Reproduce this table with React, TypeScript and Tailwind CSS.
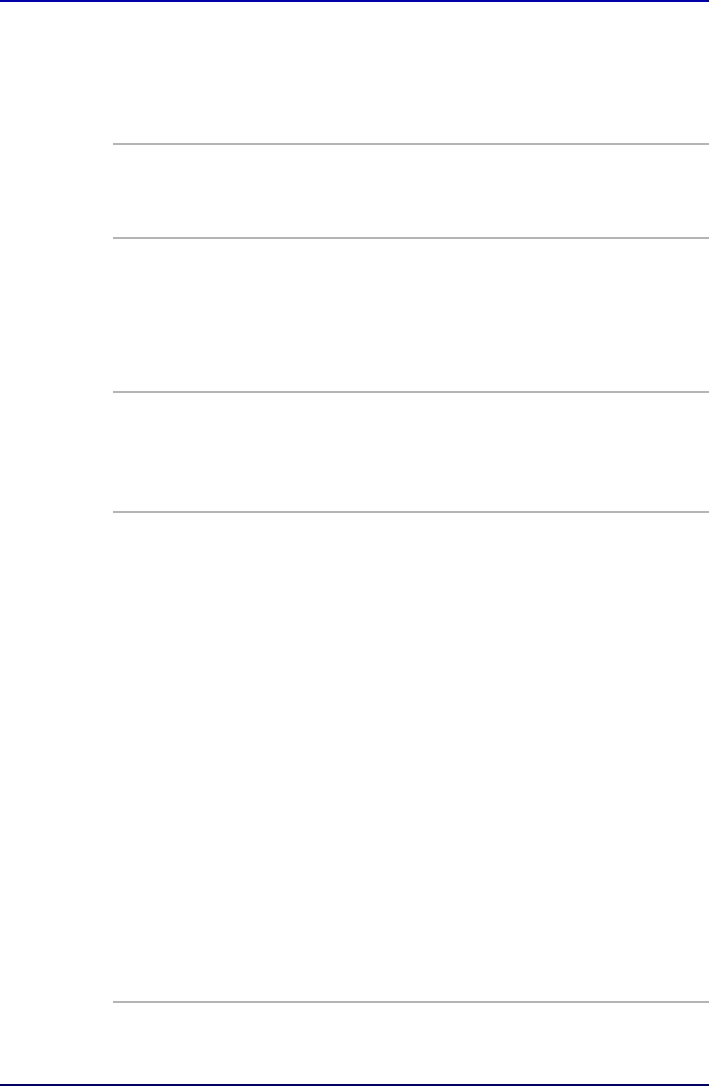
// src/App.tsx
const sections = [
  { id: "s1", height: "h-[94px]" },
  { id: "s2", height: "h-[154px]" },
  { id: "s3", height: "h-[120px]" },
  { id: "s4", height: "h-[490px]" },
  { id: "s5", height: "flex-1" },
];

export default function App() {
  return (
    <div className="w-[709px] h-[1086px] flex flex-col bg-white font-['Liberation_Sans',sans-serif]">
      <div className="h-[2px] bg-[#0000a8] shrink-0" />
      <div className="flex-1 flex flex-col pl-[113px]">
        <div className="h-[141px] shrink-0" />
        {sections.map((s) => (
          <div key={s.id} className={`border-t-2 border-[#b4b4b4] shrink-0 ${s.height}`} />
        ))}
      </div>
      <div className="h-[2px] bg-[#000066] shrink-0" />
    </div>
  );
}
